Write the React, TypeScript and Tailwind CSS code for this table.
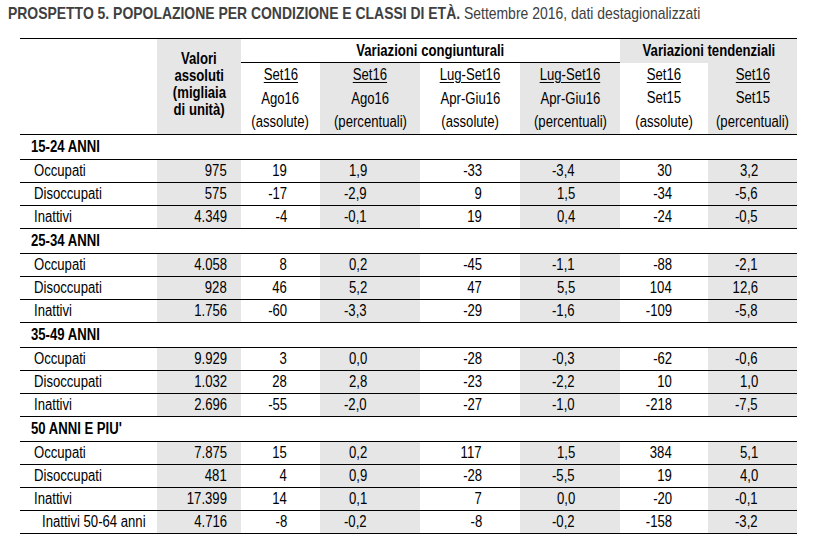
import type React from 'react';

type Row = { label: string; values: string[]; indent?: boolean };
type Section = { title: string; rows: Row[] };

const sections: Section[] = [
  {
    title: '15-24 ANNI',
    rows: [
      { label: 'Occupati', values: ['975', '19', '1,9', '-33', '-3,4', '30', '3,2'] },
      { label: 'Disoccupati', values: ['575', '-17', '-2,9', '9', '1,5', '-34', '-5,6'] },
      { label: 'Inattivi', values: ['4.349', '-4', '-0,1', '19', '0,4', '-24', '-0,5'] },
    ],
  },
  {
    title: '25-34 ANNI',
    rows: [
      { label: 'Occupati', values: ['4.058', '8', '0,2', '-45', '-1,1', '-88', '-2,1'] },
      { label: 'Disoccupati', values: ['928', '46', '5,2', '47', '5,5', '104', '12,6'] },
      { label: 'Inattivi', values: ['1.756', '-60', '-3,3', '-29', '-1,6', '-109', '-5,8'] },
    ],
  },
  {
    title: '35-49 ANNI',
    rows: [
      { label: 'Occupati', values: ['9.929', '3', '0,0', '-28', '-0,3', '-62', '-0,6'] },
      { label: 'Disoccupati', values: ['1.032', '28', '2,8', '-23', '-2,2', '10', '1,0'] },
      { label: 'Inattivi', values: ['2.696', '-55', '-2,0', '-27', '-1,0', '-218', '-7,5'] },
    ],
  },
  {
    title: "50 ANNI E PIU'",
    rows: [
      { label: 'Occupati', values: ['7.875', '15', '0,2', '117', '1,5', '384', '5,1'] },
      { label: 'Disoccupati', values: ['481', '4', '0,9', '-28', '-5,5', '19', '4,0'] },
      { label: 'Inattivi', values: ['17.399', '14', '0,1', '7', '0,0', '-20', '-0,1'] },
      { label: 'Inattivi 50-64 anni', values: ['4.716', '-8', '-0,2', '-8', '-0,2', '-158', '-3,2'], indent: true },
    ],
  },
];

// per-column cell classes (Valori + 6 variation columns)
const cellClass = [
  'bg-[#e6e6e6] text-right pr-[14px]',
  'text-right pr-[33px]',
  'bg-[#e6e6e6] text-right pr-[53px]',
  'text-right pr-[38px]',
  'bg-[#e6e6e6] text-right pr-[45px]',
  'text-right pr-[36px]',
  'bg-[#e6e6e6] text-right pr-[39px]',
];

const subHeads = [
  { top: 'Set16', mid: 'Ago16', bottom: '(assolute)', gray: false },
  { top: 'Set16', mid: 'Ago16', bottom: '(percentuali)', gray: true },
  { top: 'Lug-Set16', mid: 'Apr-Giu16', bottom: '(assolute)', gray: false },
  { top: 'Lug-Set16', mid: 'Apr-Giu16', bottom: '(percentuali)', gray: true },
  { top: 'Set16', mid: 'Set15', bottom: '(assolute)', gray: false },
  { top: 'Set16', mid: 'Set15', bottom: '(percentuali)', gray: true },
];

// no narrow face installed: squeeze Liberation Sans to Arial Narrow width
const Narrow: React.FC<{ children: React.ReactNode; origin?: 'left' | 'right' | 'center'; className?: string }> = ({
  children,
  origin = 'center',
  className = '',
}) => {
  const o = origin === 'left' ? 'origin-left' : origin === 'right' ? 'origin-right' : 'origin-center';
  return <span className={`inline-block whitespace-nowrap scale-x-[0.82] ${o} ${className}`}>{children}</span>;
};

const App: React.FC = () => {
  return (
    <div className="w-[816px] h-[550px] bg-white text-black font-['Liberation_Sans',Arial,sans-serif]">
      <div className="pl-[8px] pt-[4px] h-[38px] text-[17px] leading-[20px] text-[#404040]">
        <Narrow origin="left">
          <span className="font-bold">PROSPETTO 5. POPOLAZIONE PER CONDIZIONE E CLASSI DI ETÀ.</span>
          <span> Settembre 2016, dati destagionalizzati</span>
        </Narrow>
      </div>
      <table className="ml-[20px] w-[777px] table-fixed border-collapse border-t border-black text-[16px] leading-[20px]">
        <colgroup>
          <col className="w-[137px]" />
          <col className="w-[84px]" />
          <col className="w-[79px]" />
          <col className="w-[100px]" />
          <col className="w-[100px]" />
          <col className="w-[100px]" />
          <col className="w-[88px]" />
          <col className="w-[89px]" />
        </colgroup>
        <thead>
          <tr className="h-[24px]">
            <th rowSpan={2} className="p-0 border-b border-black"></th>
            <th
              rowSpan={2}
              className="p-0 pb-[4px] bg-[#e6e6e6] border-b border-black font-bold text-center align-middle leading-[17px]"
            >
              <div><Narrow>Valori</Narrow></div>
              <div><Narrow>assoluti</Narrow></div>
              <div><Narrow>(migliaia</Narrow></div>
              <div><Narrow>di unità)</Narrow></div>
            </th>
            <th colSpan={4} className="p-0 border-b border-black font-bold text-center leading-[22px]">
              <Narrow>Variazioni congiunturali</Narrow>
            </th>
            <th colSpan={2} className="p-0 bg-[#e6e6e6] font-bold text-center leading-[22px]">
              <Narrow>Variazioni tendenziali</Narrow>
            </th>
          </tr>
          <tr className="h-[71px]">
            {subHeads.map((h, i) => (
              <th
                key={i}
                className={`p-0 border-b border-black font-normal text-center align-middle ${h.gray ? 'bg-[#e6e6e6]' : ''}`}
              >
                <div className="leading-[23.5px]">
                  <Narrow className="underline underline-offset-2">{h.top}</Narrow>
                </div>
                <div className="leading-[23.5px]">
                  <Narrow>{h.mid}</Narrow>
                </div>
                <div className="leading-[23.5px]">
                  <Narrow>{h.bottom}</Narrow>
                </div>
              </th>
            ))}
          </tr>
        </thead>
        <tbody>
          {sections.map((s) => (
            <>
              <tr key={s.title} className="h-[25px] border-b border-black">
                <td colSpan={8} className="p-0 pl-[11px] font-bold">
                  <Narrow origin="left">{s.title}</Narrow>
                </td>
              </tr>
              {s.rows.map((r) => (
                <tr key={s.title + r.label} className="h-[23px] border-b border-black">
                  <td className={`p-0 ${r.indent ? 'pl-[22px]' : 'pl-[14px]'}`}>
                    <Narrow origin="left">{r.label}</Narrow>
                  </td>
                  {r.values.map((v, i) => (
                    <td key={i} className={`p-0 ${cellClass[i]}`}>
                      <Narrow origin="right">{v}</Narrow>
                    </td>
                  ))}
                </tr>
              ))}
            </>
          ))}
        </tbody>
      </table>
    </div>
  );
};

export default App;
